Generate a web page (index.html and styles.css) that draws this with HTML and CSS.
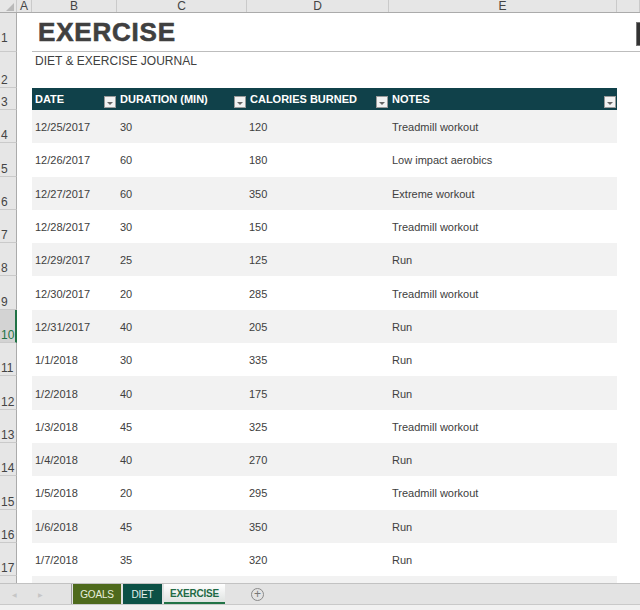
FILE: index.html
```html
<!DOCTYPE html>
<html lang="en">
<head>
    <meta charset="UTF-8">
    <title>Exercise - Diet &amp; Exercise Journal</title>
    <link rel="stylesheet" href="styles.css">
</head>
<body>
    <div class="sheet">
        <div class="row colhead">
            <div class="corner"></div>
            <div class="ch">A</div>
            <div class="ch">B</div>
            <div class="ch">C</div>
            <div class="ch">D</div>
            <div class="ch">E</div>
            <div class="ch"></div>
        </div>

        <div class="grid">
            <div class="row r-title">
                <div class="rh">1</div>
                <div></div>
                <div class="title-cell"><h1 class="title">EXERCISE</h1></div>
                <div class="shape-cell"><span class="shape"></span></div>
            </div>
            <div class="row r-sub">
                <div class="rh">2</div>
                <div></div>
                <div class="subtitle">DIET &amp; EXERCISE JOURNAL</div>
            </div>
            <div class="row r-head">
                <div class="rh">3</div>
                <div></div>
                <div class="th">DATE<span class="filter"></span></div>
                <div class="th">DURATION (MIN)<span class="filter"></span></div>
                <div class="th">CALORIES BURNED<span class="filter"></span></div>
                <div class="th">NOTES<span class="filter"></span></div>
            </div>

            <div class="row data alt"><div class="rh">4</div><div></div><div class="td">12/25/2017</div><div class="td">30</div><div class="td">120</div><div class="td">Treadmill workout</div></div>
            <div class="row data"><div class="rh">5</div><div></div><div class="td">12/26/2017</div><div class="td">60</div><div class="td">180</div><div class="td">Low impact aerobics</div></div>
            <div class="row data alt"><div class="rh">6</div><div></div><div class="td">12/27/2017</div><div class="td">60</div><div class="td">350</div><div class="td">Extreme workout</div></div>
            <div class="row data"><div class="rh">7</div><div></div><div class="td">12/28/2017</div><div class="td">30</div><div class="td">150</div><div class="td">Treadmill workout</div></div>
            <div class="row data alt"><div class="rh">8</div><div></div><div class="td">12/29/2017</div><div class="td">25</div><div class="td">125</div><div class="td">Run</div></div>
            <div class="row data"><div class="rh">9</div><div></div><div class="td">12/30/2017</div><div class="td">20</div><div class="td">285</div><div class="td">Treadmill workout</div></div>
            <div class="row data alt"><div class="rh selected">10</div><div></div><div class="td">12/31/2017</div><div class="td">40</div><div class="td">205</div><div class="td">Run</div></div>
            <div class="row data"><div class="rh">11</div><div></div><div class="td">1/1/2018</div><div class="td">30</div><div class="td">335</div><div class="td">Run</div></div>
            <div class="row data alt"><div class="rh">12</div><div></div><div class="td">1/2/2018</div><div class="td">40</div><div class="td">175</div><div class="td">Run</div></div>
            <div class="row data"><div class="rh">13</div><div></div><div class="td">1/3/2018</div><div class="td">45</div><div class="td">325</div><div class="td">Treadmill workout</div></div>
            <div class="row data alt"><div class="rh">14</div><div></div><div class="td">1/4/2018</div><div class="td">40</div><div class="td">270</div><div class="td">Run</div></div>
            <div class="row data"><div class="rh">15</div><div></div><div class="td">1/5/2018</div><div class="td">20</div><div class="td">295</div><div class="td">Treadmill workout</div></div>
            <div class="row data alt"><div class="rh">16</div><div></div><div class="td">1/6/2018</div><div class="td">45</div><div class="td">350</div><div class="td">Run</div></div>
            <div class="row data"><div class="rh">17</div><div></div><div class="td">1/7/2018</div><div class="td">35</div><div class="td">320</div><div class="td">Run</div></div>
            <div class="row data alt"><div class="rh"></div><div></div><div class="td"></div><div class="td"></div><div class="td"></div><div class="td"></div></div>
        </div>

        <div class="tabbar">
            <span class="nav">&#9664;</span>
            <span class="nav">&#9654;</span>
            <div class="tabs">
                <span class="tab goals">GOALS</span>
                <span class="tab diet">DIET</span>
                <span class="tab active">EXERCISE</span>
            </div>
            <span class="add">+</span>
        </div>
        <div class="status"></div>
    </div>
</body>
</html>
```

FILE: styles.css
```css
* { box-sizing: border-box; }
body { margin: 0; font-family: "Liberation Sans", Arial, sans-serif; background: #fff; }

.sheet {
    width: 640px;
    height: 610px;
    overflow: hidden;
    display: flex;
    flex-direction: column;
}

.row {
    display: grid;
    grid-template-columns: 17px 15px 85px 130px 142px 228px 1fr;
}

/* column letters */
.colhead {
    height: 13px;
    flex: none;
    background: #e6e6e6;
    border-bottom: 1px solid #ababab;
}
.ch {
    border-right: 1px solid #cacaca;
    font-size: 12px;
    line-height: 12px;
    color: #444;
    text-align: center;
}
.corner {
    border-right: 1px solid #cacaca;
    position: relative;
}
.corner::after {
    content: "";
    position: absolute;
    right: 2px;
    bottom: 1px;
    border-left: 8px solid transparent;
    border-bottom: 8px solid #b9b9b9;
}

.grid {
    flex: 1;
    min-height: 0;
    overflow: hidden;
}

/* row numbers */
.rh {
    background: #e6e6e6;
    border-right: 1px solid #ababab;
    border-bottom: 1px solid #cacaca;
    font-size: 12px;
    color: #444;
    padding-left: 1px;
    display: flex;
    align-items: flex-end;
    line-height: 14px;
    overflow: hidden;
    white-space: nowrap;
}
.rh.selected {
    background: #d3d3d3;
    color: #217346;
    border-right: 2px solid #217346;
}

/* title rows */
.r-title { height: 39px; }
.r-title .rh { padding-bottom: 6px; }
.title-cell {
    grid-column: 3 / 7;
    border-bottom: 1px solid #bdbdbd;
    display: flex;
    align-items: center;
    padding-left: 6px;
}
.title {
    margin: 0;
    font-size: 26px;
    font-weight: bold;
    letter-spacing: 0.8px;
    color: #404040;
    -webkit-text-stroke: 0.6px #404040;
}
.shape-cell {
    border-bottom: 1px solid #bdbdbd;
    display: flex;
    justify-content: flex-end;
    padding-top: 9px;
}
.shape {
    width: 4px;
    height: 24px;
    background: #333;
    border: 1px solid #777;
    border-right: none;
}

.r-sub { height: 36px; }
.subtitle {
    grid-column: 3 / 7;
    font-size: 12px;
    color: #404040;
    padding: 2px 0 0 3px;
}

/* table */
.r-head { height: 22px; }
.th {
    background: #10414a;
    color: #fff;
    font-size: 11px;
    font-weight: bold;
    padding: 0 1px 0 3px;
    display: flex;
    align-items: center;
    justify-content: space-between;
    white-space: nowrap;
}
.filter {
    align-self: flex-end;
    margin-bottom: 2px;
    width: 12px;
    height: 12px;
    background: #f2f2f2;
    border: 1px solid #9a9a9a;
    display: flex;
    align-items: center;
    justify-content: center;
    padding-top: 2px;
}
.filter::after {
    content: "";
    border-left: 3px solid transparent;
    border-right: 3px solid transparent;
    border-top: 3px solid #666;
}

.data { height: 33.3px; }
.td {
    font-size: 11px;
    color: #404040;
    padding: 1px 0 0 3px;
    display: flex;
    align-items: center;
    white-space: nowrap;
}
.data .td:nth-child(5) { padding-left: 2px; }
.alt .td { background: #f2f2f2; }

/* sheet tabs */
.tabbar {
    height: 22px;
    flex: none;
    background: #e3e3e3;
    border-top: 1px solid #c2c2c2;
    border-bottom: 1px solid #c9c9c9;
    display: flex;
    align-items: center;
    font-size: 11px;
}
.nav {
    color: #c6c6c6;
    font-size: 6px;
    width: 23px;
    text-align: center;
    margin-left: 3px;
}
.tabs {
    display: flex;
    gap: 2px;
    height: 100%;
    margin-left: 19px;
    padding-left: 1px;
    border-left: 1px solid #9c9c9c;
}
.tab {
    display: flex;
    align-items: center;
    justify-content: center;
    height: 20px;
    font-size: 10px;
    letter-spacing: -0.2px;
    padding: 1px 8px 0;
}
.goals { width: 48px; background: #4e6a1c; color: #e9efdc; }
.diet { width: 39px; background: #0c5146; color: #e3efec; }
.active {
    width: 61px;
    background: linear-gradient(#ffffff, #dfe3e1);
    color: #1f6a45;
    font-weight: bold;
    border-bottom: 2px solid #217346;
}
.add {
    margin-left: 26px;
    width: 13px;
    height: 13px;
    border: 1px solid #8a8a8a;
    border-radius: 50%;
    color: #777;
    font-size: 12px;
    line-height: 10px;
    text-align: center;
}

.status {
    height: 5px;
    flex: none;
    background: #f1f1f1;
}
```
